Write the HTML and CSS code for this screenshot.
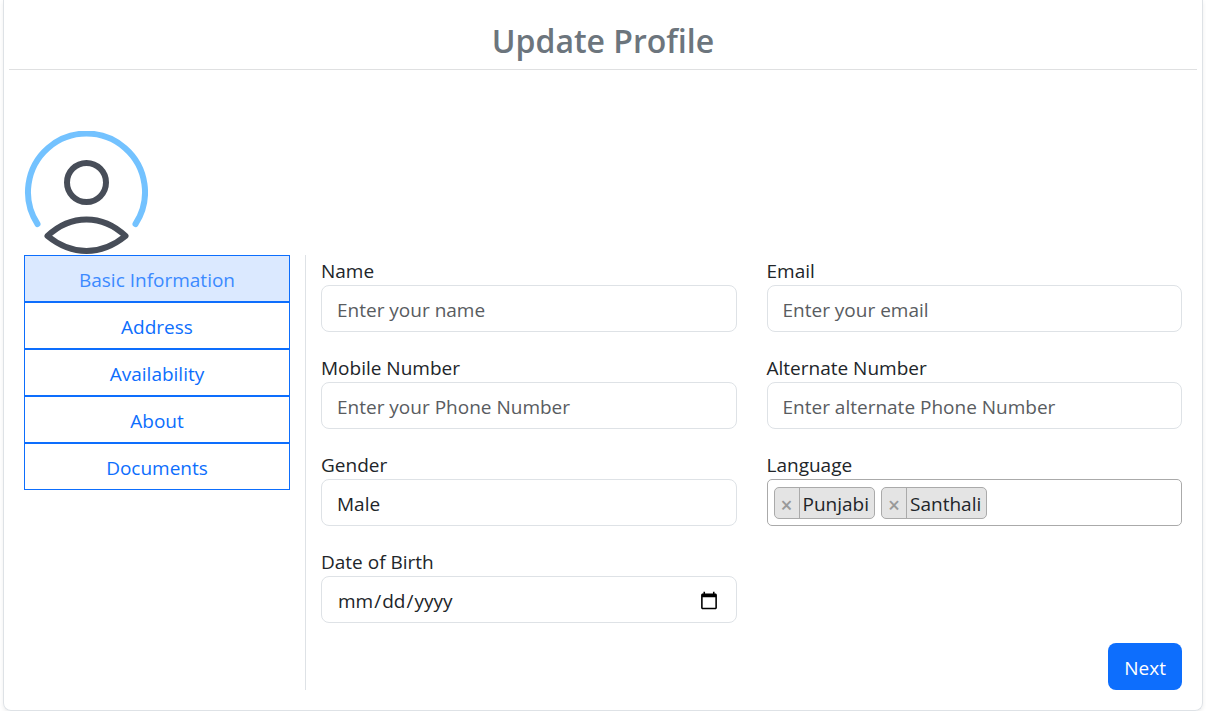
FILE: index.html
```html
<!DOCTYPE html>
<html lang="en">
<head>
<meta charset="utf-8">
<meta name="viewport" content="width=device-width, initial-scale=1">
<title>Update Profile</title>
<link rel="stylesheet" href="styles.css">
</head>
<body>
<main class="card">
  <h1 class="title">Update Profile</h1>
  <div class="layout">
    <svg class="avatar" viewBox="0 0 124 124" role="img" aria-label="Profile picture" fill="none" stroke-width="6" stroke-linecap="round" stroke-linejoin="round">
      <path class="avatar-ring" d="M13.500 93A58.500 58.500 0 1 1 111.500 93"/>
      <circle class="avatar-body" cx="62.5" cy="51.5" r="19.5"/>
      <path class="avatar-body" d="M23.500 105Q41 88.500 62.500 88.500T101.500 105Q83 120 62.500 120T23.500 105Z"/>
    </svg>
    <nav class="sidebar" aria-label="Profile sections">
      <div class="tabs">
        <button class="tab tab-active" type="button" aria-current="page">Basic Information</button>
        <button class="tab" type="button">Address</button>
        <button class="tab" type="button">Availability</button>
        <button class="tab" type="button">About</button>
        <button class="tab" type="button">Documents</button>
      </div>
    </nav>
    <form class="form">
      <div class="field">
        <label class="label" for="name">Name</label>
        <input class="control" id="name" type="text" placeholder="Enter your name">
      </div>
      <div class="field">
        <label class="label" for="email">Email</label>
        <input class="control" id="email" type="email" placeholder="Enter your email">
      </div>
      <div class="field">
        <label class="label" for="mobile">Mobile Number</label>
        <input class="control" id="mobile" type="tel" placeholder="Enter your Phone Number">
      </div>
      <div class="field">
        <label class="label" for="alternate">Alternate Number</label>
        <input class="control" id="alternate" type="tel" placeholder="Enter alternate Phone Number">
      </div>
      <div class="field">
        <label class="label" for="gender">Gender</label>
        <select class="control" id="gender">
          <option>Male</option>
          <option>Female</option>
        </select>
      </div>
      <div class="field">
        <label class="label" for="language">Language</label>
        <div class="multi">
          <span class="chip"><button class="chip-remove" type="button" aria-label="Remove Punjabi">×</button><span class="chip-text">Punjabi</span></span>
          <span class="chip"><button class="chip-remove" type="button" aria-label="Remove Santhali">×</button><span class="chip-text">Santhali</span></span>
          <input class="multi-input" id="language" type="text">
        </div>
      </div>
      <div class="field">
        <label class="label" for="dob">Date of Birth</label>
        <input class="control" id="dob" type="date">
      </div>
      <div class="actions">
        <button class="next" type="submit">Next</button>
      </div>
    </form>
  </div>
</main>
</body>
</html>
```
FILE: styles.css
```css
* {
  box-sizing: border-box;
}

body {
  margin: 0;
  background: #fff;
  color: #212529;
  font: 19px/28px "Open Sans", "Noto Sans", sans-serif;
}

button,
input,
select {
  font: inherit;
  color: inherit;
}

.card {
  margin: 0 3px;
  padding: 16px 5px 20px;
  border: 1px solid #dee2e6;
  border-top: 0;
  border-radius: 0 0 8px 8px;
  box-shadow: 0 2px 4px rgba(0, 0, 0, 0.075);
}

.title {
  margin: 0 0 61px;
  padding-bottom: 3px;
  border-bottom: 1px solid #dfe0e1;
  color: #6c757d;
  font-size: 32px;
  font-weight: 600;
  line-height: 50px;
  text-align: center;
}

.layout {
  display: grid;
  grid-template-columns: 1fr 3fr;
}

.avatar {
  grid-column: 1 / -1;
  width: 124px;
  height: 124px;
  margin-left: 15px;
}

.avatar-ring {
  stroke: #73c2ff;
}

.avatar-body {
  stroke: #474d58;
}

.sidebar {
  padding: 0 15px;
  border-right: 1px solid #dee2e6;
}

.tabs {
  display: flex;
  flex-direction: column;
}

.tab {
  height: 47px;
  padding: 2px 0 0;
  border: 1px solid #0d6efd;
  background: #fff;
  color: #0d6efd;
}

.tab-active {
  background: #dbe9ff;
  color: #3c8aff;
}

.form {
  display: grid;
  grid-template-columns: 1fr 1fr;
  gap: 20px 30px;
  padding: 0 15px;
}

.field {
  min-width: 0;
}

.label {
  display: block;
  padding-top: 2px;
}

.control {
  display: block;
  width: 100%;
  height: 47px;
  padding: 3px 15px 0;
  border: 1px solid #dee2e6;
  border-radius: 8px;
  background: #fff;
  appearance: none;
}

.control::placeholder {
  color: #595c5f;
  opacity: 1;
}

.control::-webkit-calendar-picker-indicator {
  width: 20px;
  height: 20px;
  padding: 2px;
}

.multi {
  display: flex;
  align-items: center;
  gap: 6px;
  height: 47px;
  padding: 1px 6px 0;
  border: 1px solid #aaa;
  border-radius: 5px;
}

.multi-input {
  flex: 1;
  min-width: 0;
  border: 0;
  outline: 0;
  background: transparent;
}

.chip {
  display: flex;
  height: 32px;
  border: 1px solid #aaa;
  border-radius: 5px;
  background: #e4e4e4;
}

.chip-remove {
  width: 25px;
  padding: 3px 0 0;
  border: 0;
  border-right: 1px solid #aaa;
  background: transparent;
  color: #999;
  font-size: 21px;
  font-weight: 600;
  line-height: 26px;
}

.chip-text {
  padding: 2px 5px 0 3px;
}

.actions {
  grid-column: 1 / -1;
  display: flex;
  justify-content: flex-end;
}

.next {
  height: 47px;
  padding: 2px 16px 0;
  border: 0;
  border-radius: 8px;
  background: #0d6efd;
  color: #fff;
}
```
